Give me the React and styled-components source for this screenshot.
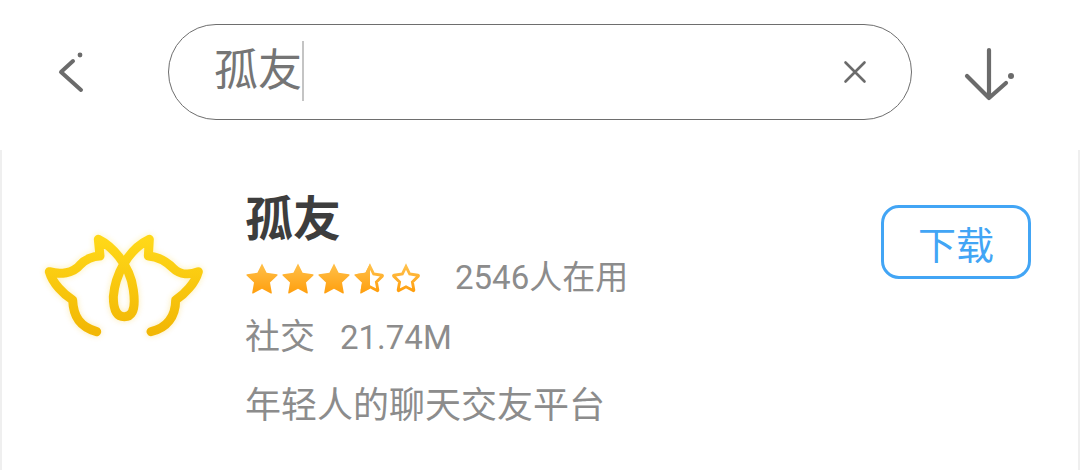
import React from 'react';
import styled, {createGlobalStyle} from 'styled-components';

const GlobalStyle = createGlobalStyle`
  html, body {
    margin: 0;
    padding: 0;
    background: #fff;
    font-family: Roboto, "Noto Sans CJK SC", sans-serif;
  }
`;

const Page = styled.div`
  width: 1080px;
  height: 470px;
  overflow: hidden;
  background: #fff;
`;

const TopBar = styled.div`
  height: 150px;
  display: flex;
  align-items: flex-start;
  padding-top: 24px;
  box-sizing: border-box;
`;

const IconSlot = styled.div`
  width: ${p => p.$width}px;
  height: 96px;
  flex: none;
  display: flex;
  align-items: center;
  justify-content: center;
`;

const SearchBox = styled.div`
  width: 744px;
  height: 96px;
  flex: none;
  box-sizing: border-box;
  border: 1px solid #6e6e6e;
  border-radius: 48px;
  display: flex;
  align-items: center;
  justify-content: space-between;
  padding: 0 44px 0 45px;
`;

const SearchText = styled.div`
  font-size: 44px;
  line-height: 60px;
  color: #757575;
  border-right: 2px solid #c4c4c4;
  margin-top: -2px;
`;

const Card = styled.div`
  height: 320px;
  box-sizing: border-box;
  border-left: 2px solid #efefef;
  border-right: 2px solid #efefef;
  display: flex;
  align-items: flex-start;
`;

const LogoSlot = styled.div`
  width: 243px;
  flex: none;
  padding-top: 70px;
  padding-left: 28px;
  box-sizing: border-box;
`;

const Info = styled.div`
  width: 636px;
  flex: none;
  padding-top: 42px;
`;

const Title = styled.div`
  font-size: 48px;
  line-height: 56px;
  font-weight: 700;
  color: #3d3d3d;
`;

const RatingRow = styled.div`
  display: flex;
  align-items: center;
  height: 60px;
  margin-top: 0;
`;

const Stars = styled.div`
  display: flex;
  gap: 2px;
  width: 210px;
  flex: none;
`;

const Meta = styled.div`
  font-size: ${p => p.$size || 32}px;
  line-height: 44px;
  color: #8c8c8c;
  white-space: nowrap;
`;

const MetaRow = styled.div`
  display: flex;
  gap: 25px;
  height: 60px;
  align-items: center;
`;

const Summary = styled.div`
  font-size: 36px;
  line-height: 50px;
  color: #8c8c8c;
  margin-top: 13px;
`;

const DownloadButton = styled.button`
  width: 150px;
  height: 74px;
  flex: none;
  margin-top: 55px;
  box-sizing: border-box;
  border: 3px solid #42a5f5;
  border-radius: 18px;
  background: #fff;
  color: #42a5f5;
  font-family: inherit;
  font-size: 38px;
  padding: 0;
`;

const starPath = 'M17 2.5 L21.6 11.8 L32 13.3 C32.6 13.4 32.8 14 32.4 14.4 L25 21.6 L26.8 31.8 C26.9 32.4 26.4 32.8 25.9 32.5 L17 27.8 L8.1 32.5 C7.6 32.8 7.1 32.4 7.2 31.8 L9 21.6 L1.6 14.4 C1.2 14 1.4 13.4 2 13.3 L12.4 11.8 Z';

const Star = ({kind, id}) => (
  <svg width="34" height="34" viewBox="0 0 34 34">
    <defs>
      <linearGradient id={id} x1="0" y1="0" x2="0" y2="1">
        <stop offset="0" stopColor="#ffc04a" />
        <stop offset="1" stopColor="#ff9f0e" />
      </linearGradient>
      <clipPath id={id + 'c'}>
        <rect x="0" y="0" width="17" height="34" />
      </clipPath>
    </defs>
    {kind === 'full' && <path d={starPath} fill={`url(#${id})`} />}
    {kind !== 'full' && (
      <path d={starPath} transform="translate(3.4 3.6) scale(0.8)" fill="none" stroke={`url(#${id})`} strokeWidth="3.6" />
    )}
    {kind === 'half' && <path d={starPath} fill={`url(#${id})`} clipPath={`url(#${id}c)`} />}
  </svg>
);

const Logo = () => (
  <svg width="190" height="130" viewBox="0 0 570 390" style={{display: 'block', overflow: 'visible'}}>
    <defs>
      <linearGradient id="logoFill" x1="0" y1="0" x2="0" y2="1">
        <stop offset="0" stopColor="#ffd818" />
        <stop offset="1" stopColor="#f2b705" />
      </linearGradient>
      <filter id="logoGlow" x="-15%" y="-15%" width="130%" height="130%">
        <feGaussianBlur stdDeviation="9" />
      </filter>
    </defs>
    {[{filter: 'url(#logoGlow)', opacity: 0.3}, {}].map((extra, i) => (
      <path
        key={i}
        d="M200 335 C150 320 130 290 128 240 C100 222 68 190 58 155 C90 165 130 160 150 135 C165 118 190 108 210 108 L205 58 C240 75 300 130 310 210 C320 280 300 290 283 290 C260 290 250 270 250 230 C255 170 290 90 358 58 L355 108 C385 110 410 125 430 145 C450 165 480 165 505 155 C495 190 465 222 437 240 C437 290 410 325 363 335"
        fill="none"
        stroke="url(#logoFill)"
        strokeWidth="27"
        strokeLinecap="round"
        strokeLinejoin="round"
        {...extra}
      />
    ))}
  </svg>
);

const App = () => (
  <Page>
    <GlobalStyle />
    <TopBar>
      <IconSlot $width={168}>
        <svg width="168" height="96" viewBox="0 0 168 96" fill="none" stroke="#6b6b6b" strokeLinecap="round">
          <path d="M81 66 L61 48 L73 37" strokeWidth="4" strokeLinejoin="round" />
          <circle cx="80" cy="31" r="2.4" fill="#6b6b6b" stroke="none" />
        </svg>
      </IconSlot>
      <SearchBox>
        <SearchText>孤友</SearchText>
        <svg width="24" height="24" viewBox="0 0 24 24" fill="none" stroke="#6b6b6b" strokeWidth="2.6" strokeLinecap="round">
          <path d="M2.5 2.5 L21.5 21.5 M21.5 2.5 L2.5 21.5" />
        </svg>
      </SearchBox>
      <IconSlot $width={168}>
        <svg width="168" height="96" viewBox="0 0 168 96" fill="none" stroke="#6b6b6b" strokeLinecap="round" strokeLinejoin="round">
          <path d="M77 26 V74 M55 52 L77 74 L94 59" strokeWidth="4.2" />
          <circle cx="99" cy="52" r="3" fill="#6b6b6b" stroke="none" />
        </svg>
      </IconSlot>
    </TopBar>
    <Card>
      <LogoSlot>
        <Logo />
      </LogoSlot>
      <Info>
        <Title>孤友</Title>
        <RatingRow>
          <Stars>
            <Star kind="full" id="s1" />
            <Star kind="full" id="s2" />
            <Star kind="full" id="s3" />
            <Star kind="half" id="s4" />
            <Star kind="empty" id="s5" />
          </Stars>
          <Meta $size={33}>2546人在用</Meta>
        </RatingRow>
        <MetaRow>
          <Meta $size={35}>社交</Meta>
          <Meta $size={33}>21.74M</Meta>
        </MetaRow>
        <Summary>年轻人的聊天交友平台</Summary>
      </Info>
      <DownloadButton>下载</DownloadButton>
    </Card>
  </Page>
);

export default App;
